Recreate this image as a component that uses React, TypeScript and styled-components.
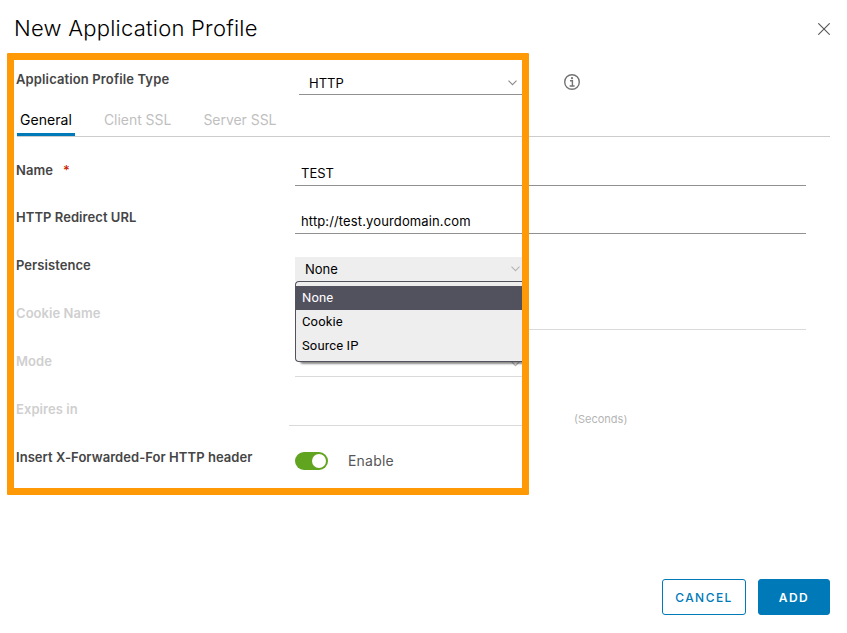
import React from "react";
import styled, { createGlobalStyle } from "styled-components";

const GlobalStyle = createGlobalStyle`
  * { box-sizing: border-box; }
  body { margin: 0; background: #fff; font-family: Inter, "Open Sans", sans-serif; }
`;

const Dialog = styled.main`
  position: relative;
  display: flex;
  flex-direction: column;
  width: 847px;
  height: 633px;
  overflow: hidden;
`;

const Header = styled.header`
  display: flex;
  justify-content: space-between;
  align-items: center;
  height: 56px;
  padding: 0 17px 0 14px;
`;

const Title = styled.h1`
  margin: 0;
  color: #000;
  font-size: 22px;
  font-weight: 300;
  line-height: 28px;
  letter-spacing: 0.24px;
`;

const IconButton = styled.button`
  display: flex;
  padding: 0;
  border: 0;
  background: none;
  color: #565656;
`;

const CloseButton = styled(IconButton)`
  margin-top: 2px;
`;

const TypeRow = styled.div`
  display: grid;
  grid-template-columns: 283px 229px 1fr;
  height: 48px;
  padding-left: 16px;
`;

const TypeSelect = styled.div`
  display: flex;
  justify-content: space-between;
  align-items: center;
  height: 24px;
  margin-top: 15px;
  padding: 0 11px 0 10px;
  border-bottom: 1px solid #919191;
`;

const InfoCell = styled.div`
  padding: 18px 0 0 36px;
`;

const Label = styled.label<{ $dim?: boolean }>`
  padding-top: 22px;
  color: ${(p) => (p.$dim ? "#cfcfcf" : "#454545")};
  font-size: 13px;
  font-weight: 600;
  line-height: 18px;
  letter-spacing: 0.06px;
  white-space: nowrap;
`;

const TypeLabel = styled(Label)`
  padding-top: 14px;
  letter-spacing: 0.13px;
`;

const NameLabel = styled(Label)`
  padding-top: 23px;
`;

const Required = styled.span`
  margin-left: 10px;
  color: #c92100;
  font-weight: 500;
`;

const Tabs = styled.nav`
  display: flex;
  gap: 26px;
  height: 33px;
  margin: 0 17px;
  border-bottom: 1px solid #ccc;
`;

const Tab = styled.button<{ $active?: boolean }>`
  height: 32px;
  padding: 0 3px;
  border: 0;
  background: none;
  box-shadow: ${(p) => (p.$active ? "inset 0 -3px #0079b8" : "none")};
  color: ${(p) => (p.$active ? "#000" : "#bfbfbf")};
  font: 400 14px/32px Inter, sans-serif;
  letter-spacing: ${(p) => (p.$active ? "0.05px" : "-0.04px")};
`;

const Form = styled.form`
  display: flex;
  flex-direction: column;
  margin-top: 1px;
`;

const FieldRow = styled.div`
  display: grid;
  grid-template-columns: 279px 511px;
  height: 48px;
  padding-left: 16px;
`;

const TextValue = styled.div<{ $dim?: boolean; $spacing?: string }>`
  height: 48px;
  padding: 25px 0 0 6px;
  border-bottom: 1px solid ${(p) => (p.$dim ? "#dadada" : "#919191")};
  color: #000;
  font-size: 13px;
  line-height: 20px;
  letter-spacing: ${(p) => p.$spacing ?? "0"};
`;

const SelectAnchor = styled.div`
  position: relative;
  width: 233px;
  height: 48px;
  padding-top: 23px;
`;

const SelectValue = styled.div`
  display: flex;
  justify-content: space-between;
  align-items: center;
  height: 24px;
  padding: 0 8px 0 10px;
  background: #eee;
`;

const DisabledSelect = styled.div`
  display: flex;
  justify-content: flex-end;
  align-items: flex-end;
  width: 233px;
  height: 47px;
  padding: 0 8px 9px 0;
  border-bottom: 1px solid #dadada;
`;

const SelectText = styled.span`
  color: #000;
  font-size: 13px;
  line-height: 20px;
`;

const Menu = styled.ul`
  position: absolute;
  z-index: 1;
  top: 47px;
  left: 0;
  width: 228px;
  height: 81px;
  margin: 0;
  padding: 4px 0;
  border: 1px solid #52515e;
  border-right: 0;
  border-radius: 4px 0 0 4px;
  background: #eee;
  box-shadow: 4px 3px 2px -1px rgba(0, 0, 0, 0.45);
  list-style: none;
`;

const Option = styled.li<{ $selected?: boolean }>`
  height: 24px;
  padding-left: 6px;
  background: ${(p) => (p.$selected ? "#52515e" : "transparent")};
  color: ${(p) => (p.$selected ? "#fff" : "#000")};
  font: 13px/24px Roboto, Arial, sans-serif;
  letter-spacing: 0.15px;
`;

const ExpiresCell = styled.div`
  display: grid;
  grid-template-columns: 239px 1fr;
  align-items: start;
  margin-left: -6px;
`;

const ExpiresInput = styled.div`
  height: 48px;
  border-bottom: 1px solid #dadada;
`;

const Unit = styled.span`
  padding: 33px 0 0 46px;
  color: #b5b5b5;
  font-size: 11px;
  line-height: 16px;
`;

const ToggleCell = styled.div`
  display: flex;
  align-items: center;
  gap: 20px;
  height: 18px;
  margin-top: 26px;
`;

const Toggle = styled.span`
  display: flex;
  justify-content: flex-end;
  width: 33px;
  height: 18px;
  padding: 2px;
  border-radius: 9px;
  background: #60a420;
`;

const Knob = styled.span`
  width: 14px;
  height: 14px;
  border-radius: 50%;
  background: #fff;
`;

const ToggleText = styled.span`
  color: #565656;
  font-size: 14px;
  line-height: 18px;
  letter-spacing: 0.2px;
`;

const Footer = styled.footer`
  display: flex;
  justify-content: flex-end;
  gap: 12px;
  margin-top: auto;
  padding: 0 17px 18px 0;
`;

const Button = styled.button<{ $primary?: boolean }>`
  width: ${(p) => (p.$primary ? "72px" : "84px")};
  height: 36px;
  padding: 1px 0 0;
  border: 1px solid #0079b8;
  border-radius: 3px;
  background: ${(p) => (p.$primary ? "#0079b8" : "#fff")};
  color: ${(p) => (p.$primary ? "#fff" : "#0079b8")};
  font: ${(p) => (p.$primary ? 600 : 500)} 12px/34px Inter, sans-serif;
  letter-spacing: 1.45px;
`;

/* Annotation frame drawn over the form */
const Highlight = styled.div`
  position: absolute;
  z-index: 2;
  top: 53px;
  left: 7px;
  width: 522px;
  height: 442px;
  border: 7px solid #ff9a06;
  border-radius: 1px;
  pointer-events: none;
`;

const Chevron = ({ color = "#8c8c8c" }: { color?: string }) => (
  <svg width="9" height="6" viewBox="0 0 9 6" fill="none" stroke={color} strokeWidth="1.1">
    <path d="M0.5 0.7 4.5 4.7 8.5 0.7" />
  </svg>
);

const CloseIcon = () => (
  <svg width="12" height="12" viewBox="0 0 12 12" fill="none" stroke="currentColor" strokeWidth="1.1">
    <path d="M0.3 0.3 11.7 11.7M11.7 0.3 0.3 11.7" />
  </svg>
);

const InfoIcon = () => (
  <svg width="16" height="16" viewBox="0 0 16 16" fill="none" stroke="#737373" strokeWidth="1.4">
    <circle cx="8" cy="8" r="7.3" />
    <path d="M6 6.8h2.4v5M5.6 12h5" />
    <circle cx="8" cy="4.2" r="1.1" fill="#737373" stroke="none" />
  </svg>
);

export default function App() {
  return (
    <Dialog>
      <GlobalStyle />
      <Header>
        <Title>New Application Profile</Title>
        <CloseButton aria-label="Close">
          <CloseIcon />
        </CloseButton>
      </Header>
      <TypeRow>
        <TypeLabel>Application Profile Type</TypeLabel>
        <TypeSelect>
          <SelectText>HTTP</SelectText>
          <Chevron />
        </TypeSelect>
        <InfoCell>
          <IconButton aria-label="Info">
            <InfoIcon />
          </IconButton>
        </InfoCell>
      </TypeRow>
      <Tabs>
        <Tab $active>General</Tab>
        <Tab>Client SSL</Tab>
        <Tab>Server SSL</Tab>
      </Tabs>
      <Form>
        <FieldRow>
          <NameLabel>
            Name<Required>*</Required>
          </NameLabel>
          <TextValue>TEST</TextValue>
        </FieldRow>
        <FieldRow>
          <Label>HTTP Redirect URL</Label>
          <TextValue $spacing="0.13px">http://test.yourdomain.com</TextValue>
        </FieldRow>
        <FieldRow>
          <Label>Persistence</Label>
          <SelectAnchor>
            <SelectValue>
              <SelectText>None</SelectText>
              <Chevron color="#b5b5b5" />
            </SelectValue>
            <Menu>
              <Option $selected>None</Option>
              <Option>Cookie</Option>
              <Option>Source IP</Option>
            </Menu>
          </SelectAnchor>
        </FieldRow>
        <FieldRow>
          <Label $dim>Cookie Name</Label>
          <TextValue $dim />
        </FieldRow>
        <FieldRow>
          <Label $dim>Mode</Label>
          <DisabledSelect>
            <Chevron color="#b5b5b5" />
          </DisabledSelect>
        </FieldRow>
        <FieldRow>
          <Label $dim>Expires in</Label>
          <ExpiresCell>
            <ExpiresInput />
            <Unit>(Seconds)</Unit>
          </ExpiresCell>
        </FieldRow>
        <FieldRow>
          <Label>Insert X-Forwarded-For HTTP header</Label>
          <ToggleCell>
            <Toggle role="switch" aria-checked="true">
              <Knob />
            </Toggle>
            <ToggleText>Enable</ToggleText>
          </ToggleCell>
        </FieldRow>
      </Form>
      <Footer>
        <Button>CANCEL</Button>
        <Button $primary>ADD</Button>
      </Footer>
      <Highlight />
    </Dialog>
  );
}
